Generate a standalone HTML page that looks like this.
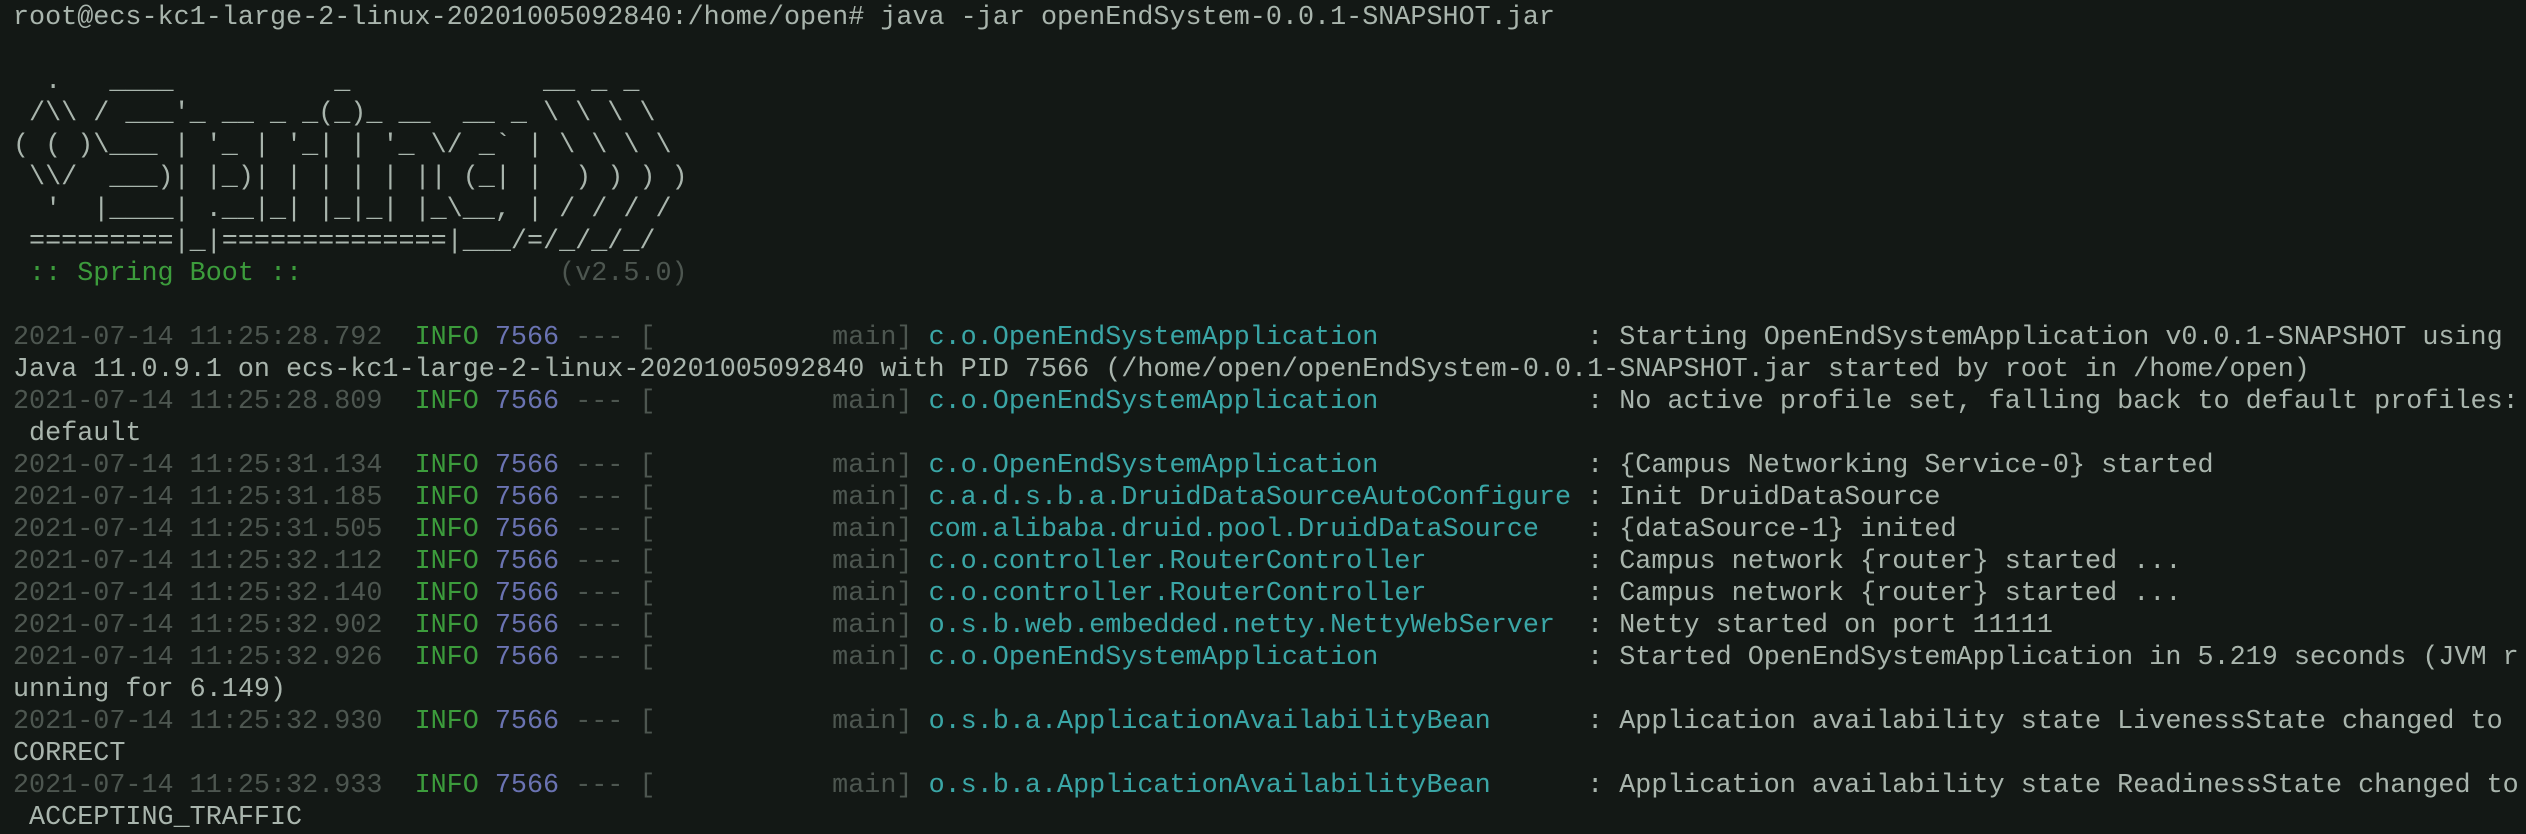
<!DOCTYPE html>
<html><head><meta charset="utf-8">
<style>
html,body{margin:0;padding:0;background:#131815;width:2526px;height:828px;overflow:hidden}
#t{position:absolute;left:13px;top:2px;font-family:"Liberation Mono",monospace;font-size:26.77px;line-height:32px;color:#a9b5ad}
.l{height:32px;white-space:pre}
.d{color:#4d5650}
.g{color:#3c9c3c}
.p{color:#6a73b2}
.c{color:#3aa6a6}
.lg{display:inline-block;width:40ch}
</style></head><body>
<div id="t"><div class="l">root@ecs-kc1-large-2-linux-20201005092840:/home/open# java -jar openEndSystem-0.0.1-SNAPSHOT.jar</div><div class="l"> </div><div class="l">  .   ____          _            __ _ _</div><div class="l"> /\\ / ___'_ __ _ _(_)_ __  __ _ \ \ \ \</div><div class="l">( ( )\___ | '_ | '_| | '_ \/ _` | \ \ \ \</div><div class="l"> \\/  ___)| |_)| | | | | || (_| |  ) ) ) )</div><div class="l">  '  |____| .__|_| |_|_| |_\__, | / / / /</div><div class="l"> =========|_|==============|___/=/_/_/_/</div><div class="l"><span class="g"> :: Spring Boot ::</span>                <span class="d">(v2.5.0)</span></div><div class="l"> </div><div class="l"><span class="d">2021-07-14 11:25:28.792</span>  <span class="g">INFO</span> <span class="p">7566</span> <span class="d">--- [           main]</span> <span class="c lg">c.o.OpenEndSystemApplication</span> : Starting OpenEndSystemApplication v0.0.1-SNAPSHOT using</div><div class="l">Java 11.0.9.1 on ecs-kc1-large-2-linux-20201005092840 with PID 7566 (/home/open/openEndSystem-0.0.1-SNAPSHOT.jar started by root in /home/open)</div><div class="l"><span class="d">2021-07-14 11:25:28.809</span>  <span class="g">INFO</span> <span class="p">7566</span> <span class="d">--- [           main]</span> <span class="c lg">c.o.OpenEndSystemApplication</span> : No active profile set, falling back to default profiles:</div><div class="l"> default</div><div class="l"><span class="d">2021-07-14 11:25:31.134</span>  <span class="g">INFO</span> <span class="p">7566</span> <span class="d">--- [           main]</span> <span class="c lg">c.o.OpenEndSystemApplication</span> : {Campus Networking Service-0} started</div><div class="l"><span class="d">2021-07-14 11:25:31.185</span>  <span class="g">INFO</span> <span class="p">7566</span> <span class="d">--- [           main]</span> <span class="c lg">c.a.d.s.b.a.DruidDataSourceAutoConfigure</span> : Init DruidDataSource</div><div class="l"><span class="d">2021-07-14 11:25:31.505</span>  <span class="g">INFO</span> <span class="p">7566</span> <span class="d">--- [           main]</span> <span class="c lg">com.alibaba.druid.pool.DruidDataSource</span> : {dataSource-1} inited</div><div class="l"><span class="d">2021-07-14 11:25:32.112</span>  <span class="g">INFO</span> <span class="p">7566</span> <span class="d">--- [           main]</span> <span class="c lg">c.o.controller.RouterController</span> : Campus network {router} started ...</div><div class="l"><span class="d">2021-07-14 11:25:32.140</span>  <span class="g">INFO</span> <span class="p">7566</span> <span class="d">--- [           main]</span> <span class="c lg">c.o.controller.RouterController</span> : Campus network {router} started ...</div><div class="l"><span class="d">2021-07-14 11:25:32.902</span>  <span class="g">INFO</span> <span class="p">7566</span> <span class="d">--- [           main]</span> <span class="c lg">o.s.b.web.embedded.netty.NettyWebServer</span> : Netty started on port 11111</div><div class="l"><span class="d">2021-07-14 11:25:32.926</span>  <span class="g">INFO</span> <span class="p">7566</span> <span class="d">--- [           main]</span> <span class="c lg">c.o.OpenEndSystemApplication</span> : Started OpenEndSystemApplication in 5.219 seconds (JVM r</div><div class="l">unning for 6.149)</div><div class="l"><span class="d">2021-07-14 11:25:32.930</span>  <span class="g">INFO</span> <span class="p">7566</span> <span class="d">--- [           main]</span> <span class="c lg">o.s.b.a.ApplicationAvailabilityBean</span> : Application availability state LivenessState changed to</div><div class="l">CORRECT</div><div class="l"><span class="d">2021-07-14 11:25:32.933</span>  <span class="g">INFO</span> <span class="p">7566</span> <span class="d">--- [           main]</span> <span class="c lg">o.s.b.a.ApplicationAvailabilityBean</span> : Application availability state ReadinessState changed to</div><div class="l"> ACCEPTING_TRAFFIC</div></div>
</body></html>
